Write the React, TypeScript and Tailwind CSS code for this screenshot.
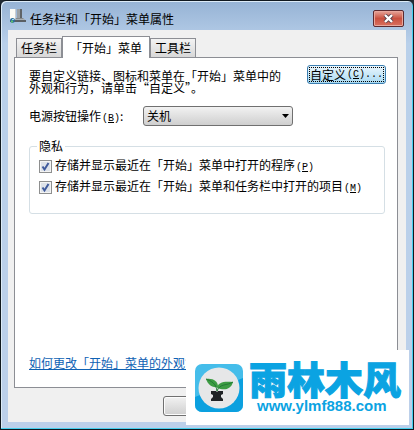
import { useState } from "react";
import type { ReactNode } from "react";

const font = "font-['Noto_Sans_CJK_SC',sans-serif]";

const tabs = ["任务栏", "「开始」菜单", "工具栏"];
const actions = ["确定", "取消", "应用"];

function TaskbarIcon() {
  return (
    <svg className="h-4 w-4 shrink-0" viewBox="0 0 16 16">
      <path d="M0 1h5v10H0z" fill="#fbfbf6" />
      <path d="M5 1h1v10H5z" fill="#c9cdd0" />
      <path d="M7 1h4v9H7z" fill="#9aa0a4" />
      <path d="M10 1h2v9h-2z" fill="#5f6467" />
      <path d="M6 10h7l2 2H5z" fill="#85898b" />
      <path d="M0 12h16v2H0z" fill="#5a5f63" />
      <path d="M5 11h10v1H5z" fill="#a9b0b5" />
      <circle cx="2.5" cy="12.5" r="2.4" fill="#2c6f9c" />
      <path d="M1 12.5h2v2H1z" fill="#5fc06c" />
      <path d="M2 11h2v1H2z" fill="#9fd6f2" />
    </svg>
  );
}

function TitleBar() {
  return (
    <header className="flex h-[29px] items-center justify-between pr-[2px] pl-[2px]">
      <div className="flex items-center gap-1">
        <TaskbarIcon />
        <h1 className="pt-[6px] text-[12px] leading-4">任务栏和「开始」菜单属性</h1>
      </div>
      <button
        type="button"
        aria-label="关闭"
        className="mt-[6px] flex h-[17px] w-[31px] items-center justify-center rounded-[2px] border border-[#5b2a30] bg-linear-to-b from-[#e5a59b] via-[#c9503f] to-[#d9705f] shadow-[inset_0_0_0_1px_#e8a79c]"
      >
        <svg className="h-[9px] w-[11px]" viewBox="0 0 11 9">
          <path d="M2 1L9 8M9 1L2 8" stroke="#59404a" strokeWidth="4" />
          <path d="M2 1L9 8M9 1L2 8" stroke="#fff" strokeWidth="2.4" />
        </svg>
      </button>
    </header>
  );
}

function Key({ children }: { children: string }) {
  return (
    <span className="pl-px font-['Liberation_Mono',monospace] text-[10px]">
      (<u>{children}</u>)
    </span>
  );
}

function Option({ children, hotkey }: { children: ReactNode; hotkey: string }) {
  const [checked, setChecked] = useState(true);
  return (
    <label className="flex h-4 items-center gap-[3px] leading-4">
      <span className="relative h-[13px] w-[13px] shrink-0">
        <input
          type="checkbox"
          checked={checked}
          onChange={(e) => setChecked(e.target.checked)}
          className="block h-[13px] w-[13px] appearance-none border border-[#8e8f8f] bg-[#dde2e9] shadow-[inset_0_0_0_1px_#f4f4f4]"
        />
        {checked && (
          <svg className="pointer-events-none absolute inset-0" viewBox="0 0 13 13">
            <path d="M3.5 6.5L5.5 9.5L9.5 3" fill="none" stroke="#3f5a9c" strokeWidth="2" />
          </svg>
        )}
      </span>
      <span>
        {children}
        <Key>{hotkey}</Key>
      </span>
    </label>
  );
}

function Watermark() {
  return (
    <div className="absolute right-[4px] bottom-[4px] flex h-[75px] w-[223px] items-center gap-[6px] bg-white pl-[9px] text-[#0ba3e2]">
      <svg className="h-12 w-12 shrink-0" viewBox="0 0 48 48">
        <rect width="48" height="48" rx="7" fill="#45bdea" />
        <path d="M0 33L48 14V41a7 7 0 0 1-7 7H7a7 7 0 0 1-7-7z" fill="#0ba0df" />
        <circle cx="24" cy="24" r="20.5" fill="#e6e7e8" />
        <path d="M11 15c7-1 12 2 12 8c-7 1-10-3-12-8z" fill="#3d9c43" />
        <path d="M22 24c1-6 7-7 16-6c-2 7-8 9-16 6z" fill="#3d9c43" />
        <path d="M11 15c5 2 10 4 11 12M38 18c-6 4-13 1-16 9" fill="none" stroke="#227a35" />
        <path d="M16 27h5l1 1l1-1h5v3l-2 1v2l2 2v2H16v-2l2-2v-2l-2-1z" fill="#202326" />
      </svg>
      <div className="flex flex-col pb-1">
        <strong className="text-[38px] leading-10 font-black [-webkit-text-stroke:1px_#0ba3e2]">雨林木风</strong>
        <span className="pl-2 font-['Liberation_Sans',sans-serif] text-[15px] leading-4 font-bold">www.ylmf888.com</span>
      </div>
    </div>
  );
}

export default function App() {
  const [active, setActive] = useState(1);
  return (
    <div className="min-h-screen bg-[#202a33]">
      <main
        className={`relative flex min-h-screen flex-col rounded-t-[6px] border border-[#10181f] bg-linear-to-b from-[#96b3d5] via-[#b9d0ea] via-10% to-[#bcd0ea] px-[7px] pb-[7px] text-[12px] text-black shadow-[inset_-1px_-1px_0_#45cfee,inset_1px_1px_0_#dcebf7] ${font}`}
      >
        <TitleBar />
        <div className="flex flex-1 flex-col bg-[#f0f0f0] pt-[6px] pr-2 pb-[6px] pl-[6px]">
          <div role="tablist" className="flex items-end pl-[2px]">
            {tabs.map((tab, i) => (
              <button
                key={tab}
                type="button"
                role="tab"
                aria-selected={i === active}
                onClick={() => setActive(i)}
                className={
                  i === active
                    ? "relative z-10 -mb-px h-[22px] border border-b-0 border-[#8c8e94] bg-white px-[7px] leading-5"
                    : "h-[19px] border border-b-0 border-[#8c8e94] bg-linear-to-b from-[#f3f3f3] to-[#d8d8d8] px-[4px] leading-[18px]"
                }
              >
                {tab}
              </button>
            ))}
          </div>
          <section className="flex flex-1 flex-col border border-[#8c8e94] bg-white px-[14px] pt-[7px] pb-4">
            <div className="-mr-[3px] flex items-start justify-between">
              <p className="pt-[5px] leading-3">
                要自定义链接、图标和菜单在「开始」菜单中的
                <br />
                外观和行为，请单击“自定义”。
              </p>
              <button
                type="button"
                className="h-[19px] w-[79px] shrink-0 rounded-[3px] border border-[#3c7fb1] bg-linear-to-b from-[#eaf6fd] to-[#a9daf2] p-px whitespace-nowrap"
              >
                <span className="flex h-full items-center justify-center border border-dotted border-black leading-4">
                  自定义<Key>C</Key>
                  <span className="font-['Liberation_Mono',monospace] text-[10px]">...</span>
                </span>
              </button>
            </div>
            <div className="mt-3 flex items-center">
              <label htmlFor="power" className="w-[114px]">
                电源按钮操作<Key>B</Key>:
              </label>
              <div className="relative">
                <select
                  id="power"
                  className="block h-5 w-[150px] appearance-none rounded-[3px] border border-[#707070] bg-linear-to-b from-[#f2f2f2] to-[#cfcfcf] px-[3px] leading-4"
                >
                  <option>关机</option>
                </select>
                <svg className="pointer-events-none absolute top-2 right-1 h-1 w-[7px]" viewBox="0 0 7 4">
                  <path d="M0 0h7L3.5 4z" />
                </svg>
              </div>
            </div>
            <fieldset className="-mr-[2px] mt-3 flex h-[76px] flex-col gap-[5px] rounded-[3px] border border-[#d5dfe5] px-[9px] pt-1">
              <legend className="-ml-[2px] px-[2px] leading-4">隐私</legend>
              <Option hotkey="P">存储并显示最近在「开始」菜单中打开的程序</Option>
              <Option hotkey="M">存储并显示最近在「开始」菜单和任务栏中打开的项目</Option>
            </fieldset>
            <a href="#help" className="mt-auto self-start leading-4 text-[#0f62b4] underline">
              如何更改「开始」菜单的外观?
            </a>
          </section>
          <div className="flex justify-end gap-[5px] pt-2">
            {actions.map((action) => (
              <button
                key={action}
                type="button"
                aria-label={action}
                className="h-[20px] w-[75px] rounded-[3px] border border-[#707070] bg-linear-to-b from-[#f2f2f2] to-[#cfcfcf] shadow-[inset_0_0_0_1px_#fcfcfc]"
              />
            ))}
          </div>
        </div>
        <Watermark />
      </main>
    </div>
  );
}
